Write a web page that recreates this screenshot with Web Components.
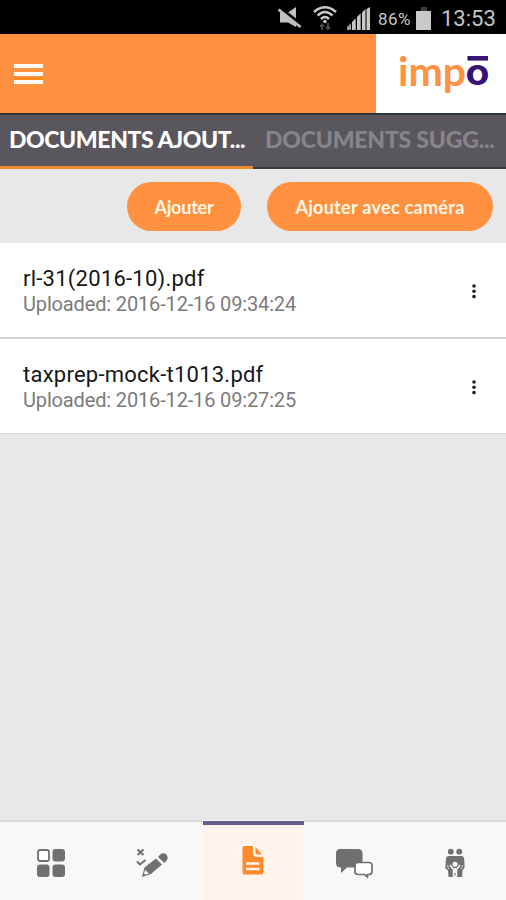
<!DOCTYPE html>
<html lang="fr">
<head>
<meta charset="utf-8">
<title>Documents</title>
<style>
	body {
		margin: 0;
		background: #e8e8e8;
		font-family: Roboto, "Liberation Sans", sans-serif;
	}
</style>
</head>
<body>
<documents-app></documents-app>

<script>
// Attach an open shadow root and fill it with the element's styles and markup
function render(element, css, html) {
	const shadowRoot = element.attachShadow({ mode: 'open' });
	shadowRoot.innerHTML = `<style>* { box-sizing: border-box; } ${css}</style>${html}`;
}

// Phone status bar: mute, wifi, signal, battery and clock
class StatusBar extends HTMLElement {
	constructor() {
		super();
		render(this, `
		:host {
			display: flex;
			align-items: center;
			justify-content: flex-end;
			height: 34px;
			padding: 2px 10px 0 0;
			background: #000;
			color: #c6c6c6;
		}
		svg { display: block; flex: none; }
		.mute { margin-right: 10px; }
		.wifi { margin-right: 9px; }
		.signal { margin-right: 8px; }
		.percent { width: 38px; padding-top: 1px; font-size: 17px; letter-spacing: 0.4px; white-space: nowrap; }
		.battery { margin-right: 10px; }
		.clock { width: 55px; padding-top: 1px; font-size: 22px; white-space: nowrap; }
		`, `
		<svg class="mute" width="25" height="24" viewBox="0 0 25 24">
			<path d="M3 6.500h8L19 1v20L11 16.500H3z" fill="#c0c0c0"/>
			<path d="M2 1.500l22 17" stroke="#000" stroke-width="3.500"/>
			<path d="M1.500 3.500l22 17.500" stroke="#c0c0c0" stroke-width="2.600"/>
		</svg>
		<svg class="wifi" width="26" height="28" viewBox="0 0 26 28" fill="none" stroke="#c8c8c8" stroke-width="2.500">
			<path d="M2 8Q13-1.500 24 8M5.500 11.500Q13 4.500 20.500 11.500M9 15Q13 11 17 15"/>
			<circle cx="13" cy="17.500" r="1.700" fill="#c8c8c8" stroke="none"/>
			<path d="M10 26v-6M8 22.500l2-2 2 2M16 19v6M14 23l2 2 2-2" stroke="#4c4c4c" stroke-width="1.800"/>
		</svg>
		<svg class="signal" width="23" height="23" viewBox="0 0 23 23">
			<path d="M0 23v-3l4-4v7z" fill="#999"/>
			<path d="M5 23v-8l3.700-3.700V23zM10 23V10l3.700-3.700V23zM15 23V5.500l3.500-3.500v21zM19.500 23V2L23 0v23z" fill="#c8c8c8"/>
		</svg>
		<span class="percent">86%</span>
		<svg class="battery" width="15" height="23" viewBox="0 0 15 23">
			<path d="M5 0h6v4H5z" fill="#3c3c3c"/>
			<path d="M0 4h15v19H0z" fill="#c9c9c9"/>
		</svg>
		<span class="clock">13:53</span>
		`);
	}
}

// Orange bar with the menu button and the brand tile
class AppHeader extends HTMLElement {
	constructor() {
		super();
		render(this, `
		:host {
			display: flex;
			justify-content: space-between;
			height: 79px;
			background: #ff9141;
		}
		.menu {
			display: flex;
			flex-direction: column;
			gap: 4px;
			padding: 30px 0 0 14px;
		}
		.menu i { width: 29px; height: 4px; background: #fffaf4; }
		.menu i:last-child { box-shadow: 0 -3px #f58a18; }
		.brand { width: 130px; background: #fff; }
		svg { display: block; }
		text { font-family: Lato, sans-serif; font-weight: 700; font-size: 40px; }
		.accent { font-family: Inter, sans-serif; font-size: 36px; }
		`, `
		<div class="menu"><i></i><i></i><i></i></div>
		<div class="brand">
			<svg width="130" height="79" viewBox="0 0 130 79">
				<!-- the brand's macron is a wide bar, so the font's own is clipped off -->
				<clipPath id="bowl"><rect x="80" y="30.300" width="40" height="30"/></clipPath>
				<text x="22" y="51.500" textLength="68" lengthAdjust="spacingAndGlyphs" fill="#ff9141">imp</text>
				<text class="accent" x="89.500" y="51.300" textLength="24" lengthAdjust="spacingAndGlyphs" fill="#351474" clip-path="url(#bowl)">ō</text>
				<rect x="91.500" y="22" width="20.500" height="4.600" fill="#351474"/>
			</svg>
		</div>
		`);
	}
}

class TabItem extends HTMLElement {
	constructor() {
		super();
		render(this, `
		:host {
			display: block;
			box-sizing: border-box;
			width: 50%;
			padding: 10px 0 0 var(--inset, 9px);
			border-bottom: 2px solid #3b373d;
			font: 900 23px/28px Lato, sans-serif;
			letter-spacing: var(--spacing, -0.4px);
			color: #87848a;
			white-space: nowrap;
		}
		:host([active]) { border-bottom: 3px solid #f18a2c; color: #fff; }
		`, `<slot></slot>`);
	}
}

class TabBar extends HTMLElement {
	constructor() {
		super();
		render(this, `
		:host {
			display: flex;
			box-sizing: border-box;
			height: 56px;
			border-top: 2px solid #2c343d;
			background: #5a565d;
		}
		`, `<slot></slot>`);
	}
}

class PillButton extends HTMLElement {
	constructor() {
		super();
		render(this, `
		:host { display: block; }
		button {
			display: block;
			width: 100%;
			height: 49px;
			padding: 1px 0 0;
			border: none;
			border-radius: 25px;
			background: #ff9141;
			color: #fff7e6;
			font: 700 18px/24px Lato, sans-serif;
			letter-spacing: var(--spacing, 0.3px);
			white-space: nowrap;
		}
		`, `<button><slot></slot></button>`);
	}
}

// One uploaded file: name, upload date and the overflow menu
class DocumentRow extends HTMLElement {
	constructor() {
		super();
		render(this, `
		:host {
			display: flex;
			box-sizing: border-box;
			align-items: center;
			justify-content: space-between;
			height: 96px;
			padding: 2px 30px 0 23px;
			border-bottom: 2px solid #d2d2d2;
			background: #fff;
		}
		.name { font-size: 22px; line-height: 28px; color: #161616; letter-spacing: 0.24px; }
		.date { margin: -1px 0 1px; font-size: 20px; line-height: 25px; color: #7b7b7b; letter-spacing: -0.15px; }
		svg { display: block; }
		`, `
		<div>
			<div class="name"><slot name="name"></slot></div>
			<div class="date"><slot name="date"></slot></div>
		</div>
		<svg width="4" height="16" viewBox="0 0 4 16" fill="#222">
			<circle cx="2" cy="3" r="1.800"/><circle cx="2" cy="8.300" r="1.800"/><circle cx="2" cy="13.600" r="1.800"/>
		</svg>
		`);
	}
}

class NavItem extends HTMLElement {
	constructor() {
		super();
		render(this, `
		:host {
			display: flex;
			box-sizing: border-box;
			flex: 1;
			justify-content: center;
			padding-top: 26px;
			border-top: 2px solid #d9d9d9;
			color: #707070;
		}
		:host([active]) {
			margin: 1px 0 0 0.6px;
			padding-top: 21px;
			border-top: 4px solid #675a88;
			background: #fff3eb;
			color: #fb8b2d;
		}
		`, `<slot></slot>`);
	}
}

class BottomNav extends HTMLElement {
	constructor() {
		super();
		render(this, `
		:host { display: flex; height: 80px; background: #f8f8f8; }
		svg { display: block; }
		`, `
		<nav-item>
			<svg width="30" height="30" viewBox="0 0 30 30" fill="currentColor">
				<rect x="2" y="2" width="11" height="11" rx="2.200" fill="#fff" stroke="currentColor" stroke-width="1.800"/>
				<rect x="16.500" y="1" width="12.500" height="12.500" rx="3"/>
				<rect x="1" y="16.500" width="12.500" height="12.500" rx="3"/>
				<rect x="16.500" y="16.500" width="12.500" height="12.500" rx="3"/>
			</svg>
		</nav-item>
		<nav-item>
			<svg width="32" height="30" viewBox="0 0 32 30">
				<path d="M1.500 1.500l6 5.500M7.500 1.500L1.500 7M1 13.500l3 3 5.500-4.500" fill="none" stroke="currentColor" stroke-width="2"/>
				<path d="M6 29l2.500-9.500L20 10.500l6 6L15 26z" fill="currentColor"/>
				<path d="M9.300 22l3.500 3.500-3.300 1.300-1.500-1.500z" fill="#f8f8f8"/>
				<path d="M22 9l2-2.300a4.200 4.200 0 0 1 6.500 6L28.300 15z" fill="currentColor"/>
			</svg>
		</nav-item>
		<nav-item active>
			<svg width="22" height="29" viewBox="0 0 22 29">
				<path d="M2 0h9v7q0 4 4 4h6.500v15q0 2.500-2.500 2.500H2.500Q.5 28.500.5 26.500V2Q.5 0 2 0z" fill="currentColor"/>
				<path d="M13.500 1l6.500 7.500h-4q-2.500 0-2.500-2.500z" fill="currentColor"/>
				<path d="M4 17.500h13.500M4 23h13.500" stroke="#fff3eb" stroke-width="2.500"/>
			</svg>
		</nav-item>
		<nav-item>
			<svg width="38" height="30" viewBox="0 0 38 30">
				<path d="M5 1h18q4.500 0 4.500 4.500v10q0 4-4.500 4H12L6 25v-5.500Q1 19.500 1 15V5.500Q1 1 5 1z" fill="currentColor"/>
				<path d="M23 14.500h11q3 0 3 3v6q0 3-3 3h-1.500v2.500l-3-2.500H23q-3 0-3-3v-6q0-3 3-3z" fill="#fff" stroke="currentColor" stroke-width="1.700"/>
			</svg>
		</nav-item>
		<nav-item>
			<svg width="20" height="30" viewBox="0 0 20 30">
				<g fill="currentColor">
					<circle cx="5.800" cy="3.700" r="2.900"/><circle cx="14.200" cy="3.700" r="2.900"/>
					<path d="M4 8h12q3 0 3.200 3l.4 8q-.2 2.500-2 2.500L17 29h-6l-1-4-1 4H3.500L3 22Q.3 21.500.4 19L1 11q.2-3 3-3z"/>
				</g>
				<circle cx="10" cy="16.300" r="2.500" fill="#f8f8f8"/>
				<path d="M5 17l3 4h4l3-4M10 20v5M8.500 22v7M11.500 22v7" fill="none" stroke="#f8f8f8" stroke-width="1.500"/>
				<path d="M2.500 17l1 4M17.500 17l-1 4" stroke="#f8f8f8" stroke-width=".7"/>
			</svg>
		</nav-item>
		`);
	}
}

class DocumentsApp extends HTMLElement {
	constructor() {
		super();
		render(this, `
		:host { display: flex; flex-direction: column; height: 900px; overflow: hidden; }
		status-bar, app-header, tab-bar, bottom-nav { flex: none; }
		.actions {
			display: flex;
			flex: none;
			justify-content: flex-end;
			gap: 26px;
			height: 74px;
			padding: 13px 13px 0 0;
		}
		.list { flex: 1; }
		document-row:last-child { height: 95px; border-bottom: 1px solid #dadada; }
		`, `
		<status-bar></status-bar>
		<app-header></app-header>
		<tab-bar>
			<tab-item active>DOCUMENTS AJOUT...</tab-item>
			<tab-item style="--inset: 12px; --spacing: -0.2px">DOCUMENTS SUGG...</tab-item>
		</tab-bar>
		<div class="actions">
			<pill-button style="width: 114px; --spacing: -0.2px">Ajouter</pill-button>
			<pill-button style="width: 226px">Ajouter avec caméra</pill-button>
		</div>
		<div class="list">
			<document-row>
				<span slot="name">rl-31(2016-10).pdf</span>
				<span slot="date">Uploaded: 2016-12-16 09:34:24</span>
			</document-row>
			<document-row>
				<span slot="name">taxprep-mock-t1013.pdf</span>
				<span slot="date">Uploaded: 2016-12-16 09:27:25</span>
			</document-row>
		</div>
		<bottom-nav></bottom-nav>
		`);
	}
}

customElements.define('status-bar', StatusBar);
customElements.define('app-header', AppHeader);
customElements.define('tab-item', TabItem);
customElements.define('tab-bar', TabBar);
customElements.define('pill-button', PillButton);
customElements.define('document-row', DocumentRow);
customElements.define('nav-item', NavItem);
customElements.define('bottom-nav', BottomNav);
customElements.define('documents-app', DocumentsApp);
</script>
</body>
</html>
